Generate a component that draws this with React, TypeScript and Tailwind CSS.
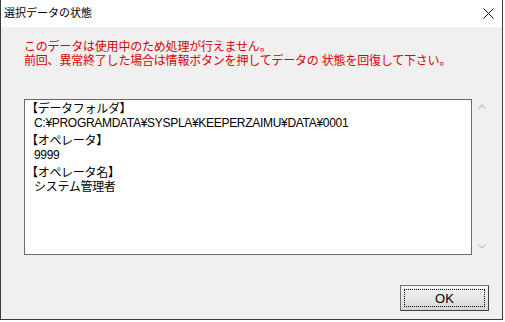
export default function App() {
  const entries = [
    { label: "【データフォルダ】", value: "C:¥PROGRAMDATA¥SYSPLA¥KEEPERZAIMU¥DATA¥0001" },
    { label: "【オペレータ】", value: "9999" },
    { label: "【オペレータ名】", value: "システム管理者" },
  ];

  return (
    <div className="w-[505px] h-[322px] bg-white font-['Liberation_Sans','Noto_Sans_CJK_JP',sans-serif] text-black">
      <div className="w-[503px] h-[320px] flex flex-col bg-[#f0f0f0] border-l border-r border-b border-[#3c3c3c]">
        {/* タイトルバー */}
        <div className="h-[27px] bg-white flex items-center justify-between pl-[3px] pr-[8px]">
          <span className="text-[11px] leading-none">選択データの状態</span>
          <svg width="11" height="11" viewBox="0 0 11 11">
            <path d="M0.5 0.5 L10.5 10.5 M10.5 0.5 L0.5 10.5" stroke="#111" strokeWidth="1" />
          </svg>
        </div>

        <div className="flex flex-col pl-[23px] pt-[13px]">
          {/* メッセージ */}
          <p className="text-[12px] leading-[14px] text-[#dc0000] tracking-[-0.2px]">
            このデータは使用中のため処理が行えません。
            <br />
            前回、異常終了した場合は情報ボタンを押してデータの 状態を回復して下さい。
          </p>

          {/* 詳細テキスト */}
          <div className="flex mt-[31px]">
            <div className="w-[448px] h-[156px] bg-white border border-[#6a6a6a] pt-[3px] pl-[1px] text-[12px] leading-[13.5px] tracking-[-0.3px]">
              {entries.map((e, i) => (
                <div key={i} className={i > 0 ? "mt-[5px]" : ""}>
                  <div>{e.label}</div>
                  <div className="pl-[8px]">{e.value}</div>
                </div>
              ))}
            </div>
            <div className="w-[20px] flex flex-col items-center justify-between pt-[5px] pb-[6px]">
              <svg width="8" height="5" viewBox="0 0 8 5">
                <path d="M0.5 4.5 L4 1 L7.5 4.5" stroke="#c2c2c2" strokeWidth="1.2" fill="none" />
              </svg>
              <svg width="8" height="5" viewBox="0 0 8 5">
                <path d="M0.5 0.5 L4 4 L7.5 0.5" stroke="#c2c2c2" strokeWidth="1.2" fill="none" />
              </svg>
            </div>
          </div>

          {/* ボタン */}
          <div className="flex justify-end pr-[13px] mt-[30px]">
            <button className="relative w-[89px] h-[26px] border border-[#707070] border-r-[#404040] border-b-[#404040] bg-gradient-to-b from-[#f7f7f7] to-[#d6d6d6] text-[13px] leading-none">
              <span className="absolute inset-[3px] border border-dotted border-black" />
              OK
            </button>
          </div>
        </div>
      </div>
    </div>
  );
}
